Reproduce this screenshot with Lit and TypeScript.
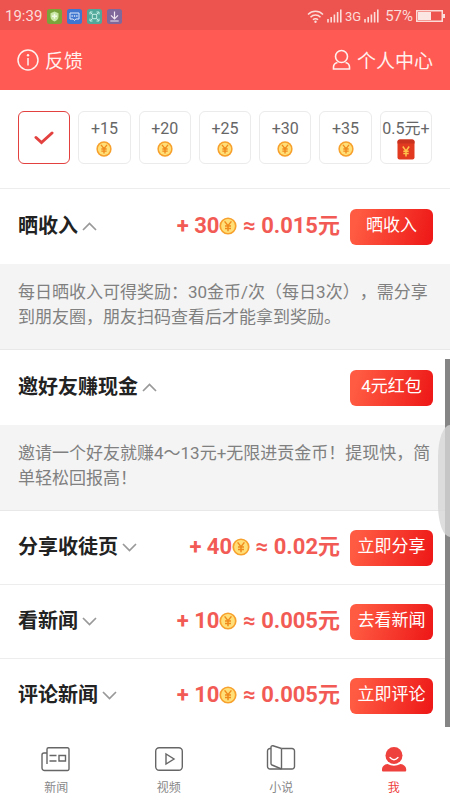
import { LitElement, html, svg, css, nothing } from "lit";
import { customElement, property, state } from "lit/decorators.js";
import { classMap } from "lit/directives/class-map.js";

interface Task {
  title: string;
  coins?: string;
  money?: string;
  action: string;
  detail?: string;
}

const TASKS: Task[] = [
  {
    title: "晒收入",
    coins: "30",
    money: "0.015元",
    action: "晒收入",
    detail:
      "每日晒收入可得奖励：30金币/次（每日3次），需分享到朋友圈，朋友扫码查看后才能拿到奖励。",
  },
  {
    title: "邀好友赚现金",
    action: "4元红包",
    detail: "邀请一个好友就赚4～13元+无限进贡金币！提现快，简单轻松回报高！",
  },
  { title: "分享收徒页", coins: "40", money: "0.02元", action: "立即分享" },
  { title: "看新闻", coins: "10", money: "0.005元", action: "去看新闻" },
  { title: "评论新闻", coins: "10", money: "0.005元", action: "立即评论" },
];

const coin = html`<svg class="coin" viewBox="0 0 18 18" aria-hidden="true">
  <circle cx="9" cy="9" r="8.6" fill="#f7a02c" />
  <circle cx="9" cy="9" r="6.9" fill="#ffdf78" />
  <path d="M5.6 4.4 9 8.6l3.4-4.2M9 8.6v5.6M6 9h6M6 11.4h6" fill="none" stroke="#f08a1c" stroke-width="1.5" />
</svg>`;

const packet = html`<svg class="packet" viewBox="0 0 18 21" aria-hidden="true">
  <rect x="0.5" y="0.5" width="17" height="20" rx="2" fill="#e23a20" />
  <path d="M.5 3a2.500 2.500 0 0 1 2.500-2.500h12A2.500 2.500 0 0 1 17.500 3v1.500H.5z" fill="#c9321f" />
  <path d="M5.800 7.500 9 12l3.200-4.500M9 12v5.500M6.300 12.200h5.400M6.300 14.600h5.400" fill="none" stroke="#ffc24a" stroke-width="1.500" />
</svg>`;

@customElement("status-bar")
class StatusBar extends LitElement {
  static styles = css`
    :host {
      display: flex;
      align-items: center;
      justify-content: space-between;
      height: 30px;
      padding: 2px 5px 0;
      box-sizing: border-box;
      background: #ed544f;
      color: #fbdcd9;
    }
    .side {
      display: flex;
      align-items: center;
      gap: 5px;
    }
    .right {
      gap: 3px;
    }
    .time {
      font-size: 15px;
    }
    .net {
      font-size: 13px;
    }
    .net + svg {
      margin-right: 3px;
    }
    svg {
      display: block;
    }
  `;

  private signal() {
    return html`<svg width="15" height="14" viewBox="0 0 15 14" aria-hidden="true">
      <path d="M1 13.500V10M4.200 13.500V8M7.400 13.500V5.500M10.600 13.500V3M13.800 13.500V0.500" stroke="#fbdcd9" stroke-width="1.600" />
    </svg>`;
  }

  render() {
    return html`
      <div class="side">
        <span class="time">19:39</span>
        <svg width="15" height="15" viewBox="0 0 15 15" aria-hidden="true">
          <rect width="15" height="15" rx="2.500" fill="#7aa33c" />
          <path d="M7.500 2.500l4 1.700v3.600c0 2.500-1.900 4-4 4.700-2.100-.7-4-2.200-4-4.700V4.200z" fill="#c9e6a5" />
          <path d="M7.500 4.800v5M5 7.300h5" stroke="#f2fae8" stroke-width="1.500" />
        </svg>
        <svg width="15" height="15" viewBox="0 0 15 15" aria-hidden="true">
          <rect width="15" height="15" rx="2.500" fill="#3f76cf" />
          <path d="M3 4h9v6H8.800L7.500 11.500 6.200 10H3z" fill="none" stroke="#dce8fb" />
          <path d="M4.500 7h1.300M6.900 7h1.300M9.200 7h1.300" stroke="#dce8fb" stroke-width="1.300" />
        </svg>
        <svg width="15" height="15" viewBox="0 0 15 15" aria-hidden="true">
          <rect width="15" height="15" rx="2.500" fill="#4fa89a" />
          <path d="M3 5.500V3h2.500M9.500 3H12v2.500M12 9.500V12H9.500M5.500 12H3V9.500M5.300 5.300h4.400v4.400H5.300zM3.500 3.500l2 2M11.500 3.500l-2 2M3.500 11.500l2-2M11.500 11.500l-2-2" fill="none" stroke="#c6eee6" />
        </svg>
        <svg width="15" height="15" viewBox="0 0 15 15" aria-hidden="true">
          <rect width="15" height="15" rx="2.500" fill="#80689a" />
          <path d="M7.500 2.500v7M4 6.300l3.500 3.500L11 6.300M3.300 12h8.400" fill="none" stroke="#f2e6f2" stroke-width="1.200" />
        </svg>
      </div>
      <div class="side right">
        <svg width="17" height="13" viewBox="0 0 17 13" fill="none" stroke="#fbdcd9" stroke-width="1.500" aria-hidden="true">
          <path d="M1 4.500a10.500 10.500 0 0 1 15 0M3.500 7.200a7 7 0 0 1 10 0M6 9.700a3.500 3.500 0 0 1 5 0" />
          <circle cx="8.500" cy="11.700" r="1.200" fill="#fbdcd9" stroke="none" />
        </svg>
        ${this.signal()}
        <span class="net">3G</span>
        ${this.signal()}
        <span class="time">57%</span>
        <svg width="29" height="12" viewBox="0 0 29 12" aria-hidden="true">
          <rect x="0.750" y="0.750" width="25.500" height="10.500" fill="none" stroke="#fbdcd9" stroke-width="1.500" />
          <rect x="2" y="2" width="13" height="8" fill="#fbe6e3" />
          <rect x="27" y="4" width="2" height="4" fill="#fbdcd9" />
        </svg>
      </div>
    `;
  }
}

@customElement("sign-days")
class SignDays extends LitElement {
  static styles = css`
    :host {
      display: block;
      padding: 21px 18px 24px;
      border-bottom: 1px solid #ededed;
    }
    .days {
      display: grid;
      grid-template-columns: repeat(7, 1fr);
      gap: 8px;
      margin: 0;
      padding: 0;
      list-style: none;
    }
    .day {
      display: flex;
      flex-direction: column;
      align-items: center;
      height: 53px;
      padding-top: 7px;
      box-sizing: border-box;
      min-width: 0;
      border: 1px solid #ebebeb;
      border-radius: 6px;
      color: #666;
      font-size: 16px;
      line-height: 20px;
      white-space: nowrap;
    }
    .done {
      justify-content: center;
      padding-top: 0;
      border-color: #e2413f;
    }
    .coin {
      width: 16px;
      height: 16px;
      margin-top: 2px;
    }
    .packet {
      width: 18px;
      height: 21px;
    }
  `;

  render() {
    return html`<ul class="days">
      <li class="day done">
        <svg width="20" height="14" viewBox="0 0 20 14" role="img" aria-label="已签到">
          <path d="M2 6.500l5.500 5L18 2" fill="none" stroke="#e2413f" stroke-width="3" stroke-linecap="round" />
        </svg>
      </li>
      ${[15, 20, 25, 30, 35].map((n) => html`<li class="day">+${n}${coin}</li>`)}
      <li class="day">0.5元+${packet}</li>
    </ul>`;
  }
}

@customElement("task-item")
class TaskItem extends LitElement {
  @property({ attribute: false }) task!: Task;
  @state() private open = false;

  static styles = css`
    :host {
      display: block;
    }
    .row {
      display: flex;
      align-items: center;
      height: 74px;
      padding: 0 17px 0 18px;
      box-sizing: border-box;
      border-bottom: 1px solid #ededed;
    }
    .row.open {
      height: 75px;
      border-bottom: 0;
    }
    button {
      border: 0;
      padding: 0;
      font: inherit;
      cursor: pointer;
    }
    .title {
      display: flex;
      align-items: center;
      gap: 4px;
      padding-bottom: 2px;
      background: none;
      color: #222;
      font-size: 20px;
      font-weight: 700;
      line-height: 28px;
      white-space: nowrap;
    }
    .chevron {
      margin-top: 2px;
    }
    .reward {
      display: flex;
      align-items: center;
      margin-left: auto;
      padding-bottom: 2px;
      color: #f25b55;
      font-size: 22px;
      font-weight: 700;
      line-height: 28px;
      white-space: pre;
    }
    .coin {
      width: 18px;
      height: 18px;
    }
    .action {
      width: 83px;
      height: 36px;
      margin-left: auto;
      padding-bottom: 3px;
      flex: none;
      border-radius: 6px;
      background: linear-gradient(105deg, #ff5b42 10%, #ee1a19 95%);
      color: #fff;
      font-size: 17px;
      line-height: 24px;
    }
    .reward + .action {
      margin-left: 10px;
    }
    .detail {
      margin: 0;
      padding: 16px 18px 19px;
      border-bottom: 1px solid #e8e8e8;
      background: #f4f4f4;
      color: #808080;
      font-size: 17px;
      line-height: 25px;
      text-spacing-trim: space-all;
    }
  `;

  willUpdate(changed: Map<string, unknown>) {
    if (changed.has("task")) this.open = !!this.task.detail;
  }

  render() {
    const { title, coins, money, action, detail } = this.task;
    return html`
      <div class=${classMap({ row: true, open: this.open && !!detail })}>
        <button class="title" aria-expanded=${this.open} @click=${() => (this.open = !this.open)}>
          ${title}
          <svg class="chevron" width="15" height="9" viewBox="0 0 15 9" aria-hidden="true">
            ${this.open
              ? svg`<path d="M1 8l6.500-6.500L14 8" fill="none" stroke="#999" stroke-width="1.700" />`
              : svg`<path d="M1 1l6.500 6.500L14 1" fill="none" stroke="#999" stroke-width="1.700" />`}
          </svg>
        </button>
        ${coins ? html`<span class="reward">+ ${coins}${coin} ≈ ${money}</span>` : nothing}
        <button class="action">${action}</button>
      </div>
      ${this.open && detail ? html`<p class="detail">${detail}</p>` : nothing}
    `;
  }
}

@customElement("tab-bar")
class TabBar extends LitElement {
  static styles = css`
    :host {
      display: grid;
      grid-template-columns: repeat(4, 1fr);
      height: 73px;
      background: #fff;
    }
    .tab {
      display: flex;
      flex-direction: column;
      align-items: center;
      gap: 6px;
      padding-top: 18px;
      color: #888;
      font-size: 12px;
      line-height: 18px;
      text-decoration: none;
    }
    .active {
      color: #ee403c;
    }
  `;

  render() {
    return html`
      <a class="tab" href="#news">
        <svg width="30" height="28" viewBox="0 0 30 28" fill="none" stroke="#666" stroke-width="1.400" aria-hidden="true">
          <path d="M6 19V4.300a1.500 1.500 0 0 1 1.500-1.500h19A1.500 1.500 0 0 1 28 4.300V24a1.500 1.500 0 0 1-1.500 1.500H3.500A2.500 2.500 0 0 1 1 23V10a2 2 0 0 1 2-2h3" />
          <path d="M8.500 10.500h7M8.500 16h7M18 10.500h6.500V16H18z" />
        </svg>
        新闻
      </a>
      <a class="tab" href="#video">
        <svg width="30" height="28" viewBox="0 0 30 28" fill="none" stroke="#666" stroke-width="1.400" aria-hidden="true">
          <rect x="1.700" y="2.700" width="26.600" height="22.600" rx="3.500" />
          <path d="M12 9v10l8-5z" />
        </svg>
        视频
      </a>
      <a class="tab" href="#novel">
        <svg width="30" height="28" viewBox="0 0 30 28" fill="none" stroke="#666" stroke-width="1.400" aria-hidden="true">
          <path d="M15.500 3.500H26a2.500 2.500 0 0 1 2.500 2.500v15.500A2.500 2.500 0 0 1 26 24H4a2.500 2.500 0 0 1-2.500-2.500V6A2.500 2.500 0 0 1 4 3.500h1M15.500 3.500v20.500" />
          <path d="M15.500 3.500 7 .8Q5 .5 5 2.500V18.500q0 1 1 1.500l9.500 4" />
        </svg>
        小说
      </a>
      <a class="tab active" href="#me" aria-current="page">
        <svg width="30" height="28" viewBox="0 0 30 28" aria-hidden="true">
          <circle cx="15" cy="10.500" r="8.500" fill="#ee403c" />
          <path d="M11 12.500q4 4.500 8 0" fill="none" stroke="#fff" stroke-width="1.300" stroke-linecap="round" />
          <path d="M8.500 19q6.500 3.500 13 0 5 .8 5.700 5v1.500q0 1-1 1H4q-1 0-1-1V24q.5-4.200 5.500-5z" fill="#ee403c" />
        </svg>
        我
      </a>
    `;
  }
}

@customElement("app-root")
class AppRoot extends LitElement {
  static styles = css`
    :host {
      display: flex;
      flex-direction: column;
      height: 100vh;
      position: relative;
      overflow: hidden;
      background: #fff;
      font-family: Roboto, "Noto Sans CJK SC", sans-serif;
    }
    .header {
      display: flex;
      align-items: center;
      justify-content: space-between;
      flex: none;
      height: 60px;
      padding: 0 17px;
      box-sizing: border-box;
      background: #ff5a53;
    }
    .link {
      display: flex;
      align-items: center;
      gap: 6px;
      color: #fff0ee;
      font-size: 19px;
      line-height: 28px;
      text-decoration: none;
    }
    .label {
      padding-top: 3px;
    }
    .content {
      flex: 1;
      min-height: 0;
      overflow: hidden;
      position: relative;
    }
    .thumb {
      position: absolute;
      right: 0;
      top: 269px;
      bottom: 0;
      width: 5px;
      background: #858585;
    }
    .handle {
      position: absolute;
      right: 0;
      top: 335px;
      width: 12px;
      height: 112px;
      border-radius: 12px 0 0 12px / 32px 0 0 32px;
      background: rgba(214, 214, 214, 0.8);
    }
  `;

  render() {
    return html`
      <status-bar></status-bar>
      <header class="header">
        <a class="link" href="#feedback">
          <svg width="22" height="22" viewBox="0 0 22 22" fill="none" stroke="#fff0ee" stroke-width="1.500" aria-hidden="true">
            <circle cx="11" cy="11" r="10" />
            <path d="M11 9v7.500" />
            <circle cx="11" cy="6.300" r="1.200" fill="#fff0ee" stroke="none" />
          </svg>
          <span class="label">反馈</span>
        </a>
        <a class="link" href="#profile">
          <svg width="19" height="22" viewBox="0 0 19 22" fill="none" stroke="#fff0ee" stroke-width="1.600" aria-hidden="true">
            <circle cx="9.500" cy="7.500" r="6" />
            <path d="M5.500 13.500Q1.500 14.500 1.500 18v2h16v-2q0-3.500-4-4.500" />
          </svg>
          <span class="label">个人中心</span>
        </a>
      </header>
      <main class="content">
        <sign-days></sign-days>
        ${TASKS.map((t) => html`<task-item .task=${t}></task-item>`)}
        <div class="thumb"></div>
        <div class="handle"></div>
      </main>
      <tab-bar></tab-bar>
    `;
  }
}
